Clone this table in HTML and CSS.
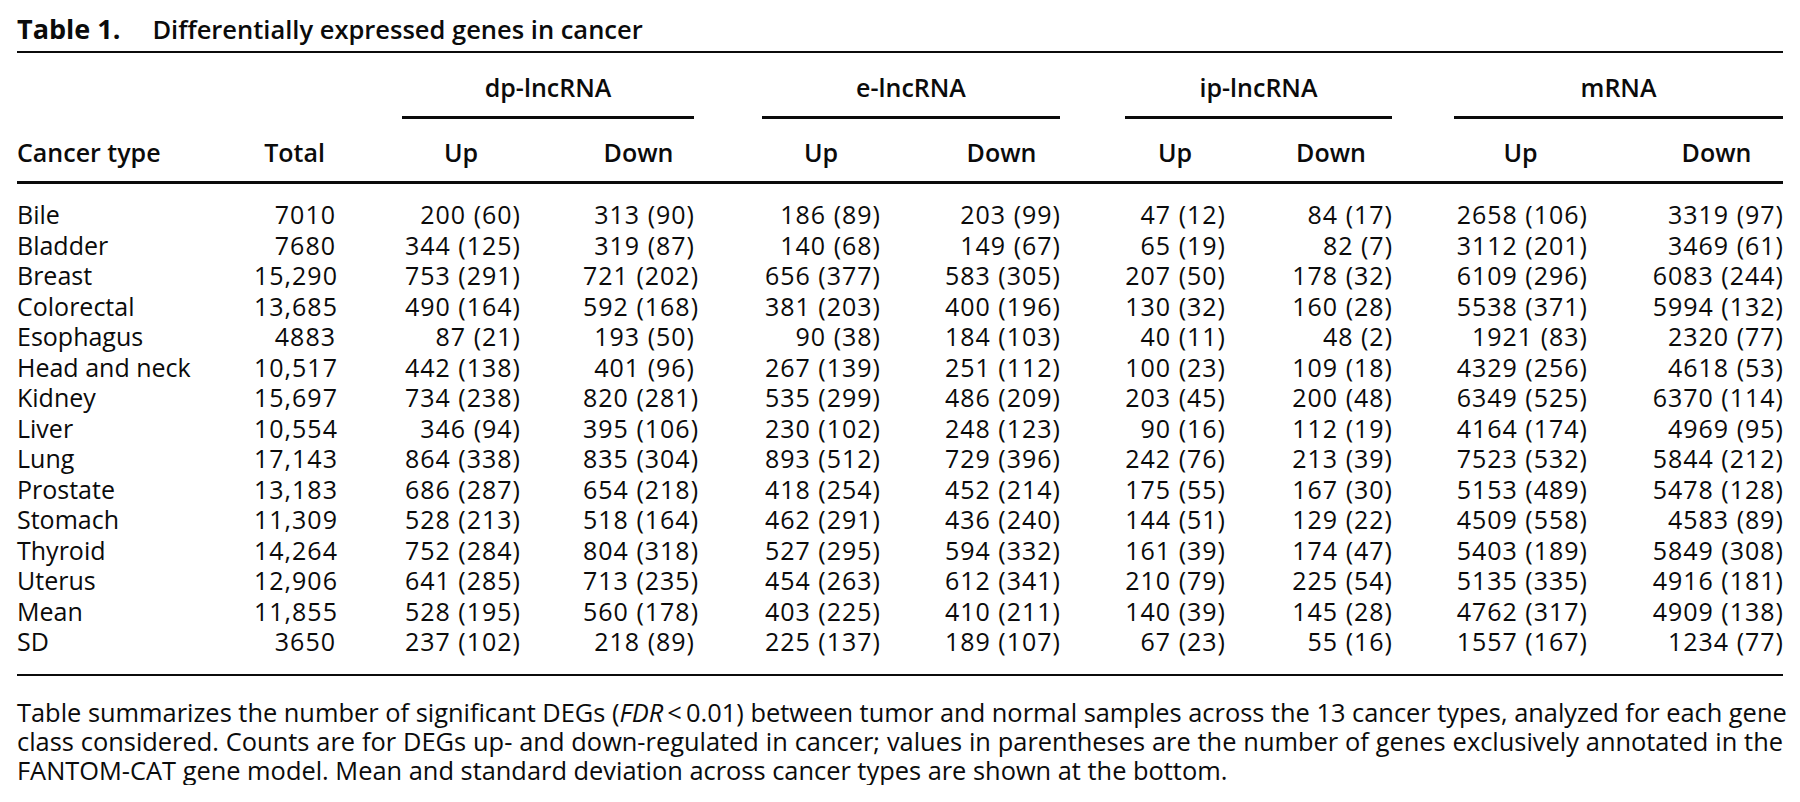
FILE: index.html
```html
<!DOCTYPE html>
<html lang="en">
<head>
<meta charset="utf-8">
<title>Table 1. Differentially expressed genes in cancer</title>
<link rel="stylesheet" href="styles.css">
</head>
<body>
<div class="page">
  <h1 class="title"><span class="label">Table 1.</span><span class="caption">Differentially expressed genes in cancer</span></h1>
  <div class="table">
    <div class="row spanners">
      <div class="blank"></div>
      <div class="group"><span>dp-lncRNA</span></div>
      <div class="group"><span>e-lncRNA</span></div>
      <div class="group"><span>ip-lncRNA</span></div>
      <div class="group"><span>mRNA</span></div>
    </div>
    <div class="row heads">
      <div>Cancer type</div><div>Total</div>
      <div>Up</div><div>Down</div><div>Up</div><div>Down</div>
      <div>Up</div><div>Down</div><div>Up</div><div>Down</div>
    </div>
    <div class="body">
      <div class="row"><div>Bile</div><div>7010</div><div>200 (60)</div><div>313 (90)</div><div>186 (89)</div><div>203 (99)</div><div>47 (12)</div><div>84 (17)</div><div>2658 (106)</div><div>3319 (97)</div></div>
      <div class="row"><div>Bladder</div><div>7680</div><div>344 (125)</div><div>319 (87)</div><div>140 (68)</div><div>149 (67)</div><div>65 (19)</div><div>82 (7)</div><div>3112 (201)</div><div>3469 (61)</div></div>
      <div class="row"><div>Breast</div><div>15,290</div><div>753 (291)</div><div>721 (202)</div><div>656 (377)</div><div>583 (305)</div><div>207 (50)</div><div>178 (32)</div><div>6109 (296)</div><div>6083 (244)</div></div>
      <div class="row"><div>Colorectal</div><div>13,685</div><div>490 (164)</div><div>592 (168)</div><div>381 (203)</div><div>400 (196)</div><div>130 (32)</div><div>160 (28)</div><div>5538 (371)</div><div>5994 (132)</div></div>
      <div class="row"><div>Esophagus</div><div>4883</div><div>87 (21)</div><div>193 (50)</div><div>90 (38)</div><div>184 (103)</div><div>40 (11)</div><div>48 (2)</div><div>1921 (83)</div><div>2320 (77)</div></div>
      <div class="row"><div>Head and neck</div><div>10,517</div><div>442 (138)</div><div>401 (96)</div><div>267 (139)</div><div>251 (112)</div><div>100 (23)</div><div>109 (18)</div><div>4329 (256)</div><div>4618 (53)</div></div>
      <div class="row"><div>Kidney</div><div>15,697</div><div>734 (238)</div><div>820 (281)</div><div>535 (299)</div><div>486 (209)</div><div>203 (45)</div><div>200 (48)</div><div>6349 (525)</div><div>6370 (114)</div></div>
      <div class="row"><div>Liver</div><div>10,554</div><div>346 (94)</div><div>395 (106)</div><div>230 (102)</div><div>248 (123)</div><div>90 (16)</div><div>112 (19)</div><div>4164 (174)</div><div>4969 (95)</div></div>
      <div class="row"><div>Lung</div><div>17,143</div><div>864 (338)</div><div>835 (304)</div><div>893 (512)</div><div>729 (396)</div><div>242 (76)</div><div>213 (39)</div><div>7523 (532)</div><div>5844 (212)</div></div>
      <div class="row"><div>Prostate</div><div>13,183</div><div>686 (287)</div><div>654 (218)</div><div>418 (254)</div><div>452 (214)</div><div>175 (55)</div><div>167 (30)</div><div>5153 (489)</div><div>5478 (128)</div></div>
      <div class="row"><div>Stomach</div><div>11,309</div><div>528 (213)</div><div>518 (164)</div><div>462 (291)</div><div>436 (240)</div><div>144 (51)</div><div>129 (22)</div><div>4509 (558)</div><div>4583 (89)</div></div>
      <div class="row"><div>Thyroid</div><div>14,264</div><div>752 (284)</div><div>804 (318)</div><div>527 (295)</div><div>594 (332)</div><div>161 (39)</div><div>174 (47)</div><div>5403 (189)</div><div>5849 (308)</div></div>
      <div class="row"><div>Uterus</div><div>12,906</div><div>641 (285)</div><div>713 (235)</div><div>454 (263)</div><div>612 (341)</div><div>210 (79)</div><div>225 (54)</div><div>5135 (335)</div><div>4916 (181)</div></div>
      <div class="row"><div>Mean</div><div>11,855</div><div>528 (195)</div><div>560 (178)</div><div>403 (225)</div><div>410 (211)</div><div>140 (39)</div><div>145 (28)</div><div>4762 (317)</div><div>4909 (138)</div></div>
      <div class="row"><div>SD</div><div>3650</div><div>237 (102)</div><div>218 (89)</div><div>225 (137)</div><div>189 (107)</div><div>67 (23)</div><div>55 (16)</div><div>1557 (167)</div><div>1234 (77)</div></div>
    </div>
  </div>
  <p class="note">
    <span class="line">Table summarizes the number of significant DEGs (<i>FDR</i>&thinsp;&lt;&thinsp;0.01) between tumor and normal samples across the 13 cancer types, analyzed for each gene</span>
    <span class="line">class considered. Counts are for DEGs up- and down-regulated in cancer; values in parentheses are the number of genes exclusively annotated in the</span>
    <span class="line last">FANTOM-CAT gene model. Mean and standard deviation across cancer types are shown at the bottom.</span>
  </p>
</div>
</body>
</html>
```

FILE: styles.css
```css
html, body {
  margin: 0;
  padding: 0;
  background: #ffffff;
}

body {
  font-family: "Open Sans", "Noto Sans", "Liberation Sans", sans-serif;
  color: #0b0b0b;
}

.page {
  width: 1766px;
  padding: 0 17px;
}

.title {
  margin: 13px 0 0;
  height: 38px;
  font-size: 27px;
  line-height: 32px;
  font-weight: 700;
  white-space: nowrap;
}

.title .label {
  font-weight: 700;
  margin-right: 32px;
}

.title .caption {
  font-weight: 600;
  font-size: 25.5px;
}

.table {
  border-top: 2px solid #0b0b0b;
  border-bottom: 2px solid #0b0b0b;
}

/* Column tracks: the gap before each column is its left padding,
   so the content box spans exactly the widest figure of the column. */
.row {
  display: grid;
  grid-template-columns: 200px 118px 185px 174px 186px 180px 165px 167px 195px 196px;
  font-size: 25px;
  line-height: 30.5px;
  white-space: nowrap;
}

.row > div:nth-child(2) { padding-left: 37px; }
.row > div:nth-child(3) { padding-left: 67px; }
.row > div:nth-child(4) { padding-left: 63px; }
.row > div:nth-child(5) { padding-left: 68px; }
.row > div:nth-child(6) { padding-left: 63px; }
.row > div:nth-child(7) { padding-left: 65px; }
.row > div:nth-child(8) { padding-left: 45px; }
.row > div:nth-child(9) { padding-left: 62px; }
.row > div:nth-child(10) { padding-left: 63px; }

.body .row > div:not(:first-child) {
  text-align: right;
  letter-spacing: 1px;
  margin-right: -1px;
}

.spanners {
  padding-top: 19px;
  font-weight: 600;
}

.spanners .blank {
  grid-column: span 2;
}

.spanners .group {
  grid-column: span 2;
  text-align: center;
}

.spanners .group span {
  display: block;
  padding-bottom: 13px;
  border-bottom: 3px solid #0b0b0b;
}

.spanners > div:nth-child(1) { padding-left: 0; }
.spanners > div:nth-child(2) { padding-left: 67px; }
.spanners > div:nth-child(3) { padding-left: 68px; }
.spanners > div:nth-child(4) { padding-left: 65px; }
.spanners > div:nth-child(5) { padding-left: 62px; }

.heads {
  padding-top: 18.5px;
  padding-bottom: 13px;
  border-bottom: 3px solid #0b0b0b;
  font-weight: 600;
}

.heads > div:not(:first-child) {
  text-align: center;
}

.body {
  padding-top: 15.5px;
  padding-bottom: 17px;
}

.note {
  margin: 22px 0 0;
  font-size: 25.4px;
  line-height: 29px;
}

.note .line {
  display: block;
  text-align: justify;
  text-align-last: justify;
  white-space: nowrap;
}

.note .line.last {
  text-align: left;
  text-align-last: left;
}
```
